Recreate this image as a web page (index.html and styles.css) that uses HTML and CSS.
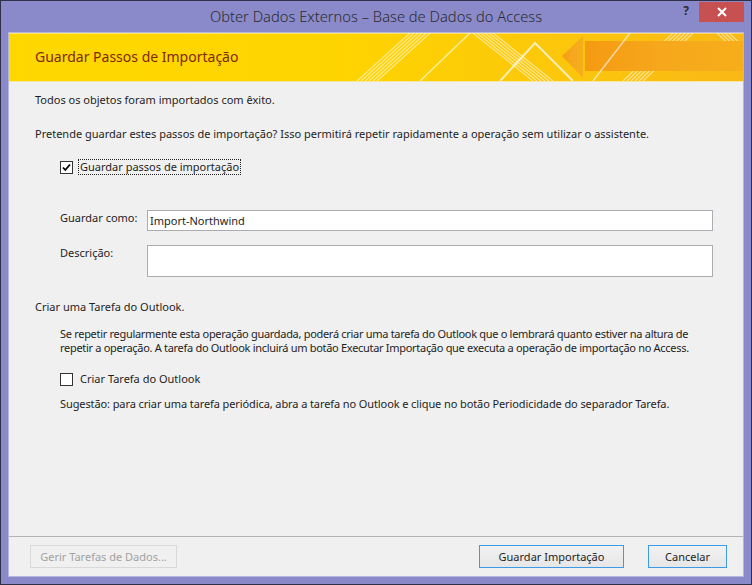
FILE: index.html
```html
<!DOCTYPE html>
<html lang="pt">
<head>
<meta charset="utf-8">
<title>Obter Dados Externos</title>
<link rel="stylesheet" href="styles.css">
</head>
<body>
<div class="window">
  <div class="titlebar">
    <div class="tb-side"></div>
    <div class="tb-title">Obter Dados Externos – Base de Dados do Access</div>
    <div class="tb-side tb-controls">
      <span class="tb-help">?</span>
      <span class="tb-close">
        <svg width="10" height="10" viewBox="0 0 10 10"><path d="M1 1L9 9M9 1L1 9" stroke="#fff" stroke-width="2"/></svg>
      </span>
    </div>
  </div>
  <div class="frame">
    <div class="banner">
      <svg class="banner-art" width="734" height="48" viewBox="0 0 734 48" preserveAspectRatio="none">
        <defs>
          <linearGradient id="bg" x1="0" y1="0" x2="1" y2="0">
            <stop offset="0" stop-color="#ffd800"/>
            <stop offset="0.45" stop-color="#fed400"/>
            <stop offset="0.75" stop-color="#fcc70b"/>
            <stop offset="1" stop-color="#f9b816"/>
          </linearGradient>
          <linearGradient id="arrow" x1="0" y1="0" x2="1" y2="0">
            <stop offset="0" stop-color="#f59a12"/>
            <stop offset="0.5" stop-color="#f6a81c"/>
            <stop offset="1" stop-color="#f7ae1a"/>
          </linearGradient>
        </defs>
        <rect width="734" height="48" fill="url(#bg)"/>
        <g stroke="#fff" stroke-opacity="0.55" stroke-width="1.2">
          <path d="M348 48L401 0M352 48L405 0M356 48L409 0M360 48L413 0M364 48L417 0M368 48L421 0"/>
          <path d="M464 0L524 48M468 0L528 48M472 0L532 48M476 0L536 48M480 0L540 48M484 0L544 48"/>
          <path d="M614 48L664 0M618 48L668 0M622 48L672 0M626 48L676 0M630 48L680 0M634 48L684 0"/>
          <path d="M708 0L740 30M712 0L744 30M716 0L748 30M720 0L752 30"/>
        </g>
        <path d="M411 48L461 0" stroke="#fff5b0" stroke-opacity="0.85" stroke-width="1.5"/>
        <path d="M553 23L574 3L574 45Z" fill="url(#arrow)"/>
        <rect x="576" y="8" width="158" height="30" fill="url(#arrow)"/>
        <path d="M491 48L526 10L564 48" fill="none" stroke="#fff" stroke-opacity="0.7" stroke-width="2"/>
        <path d="M584 48L621 0" stroke="#fff" stroke-opacity="0.6" stroke-width="1.5"/>
        <rect x="0" y="0" width="734" height="1" fill="#fff" fill-opacity="0.4"/>
      </svg>
      <div class="banner-title">Guardar Passos de Importação</div>
    </div>
    <div class="content">
      <p class="line first">Todos os objetos foram importados com êxito.</p>
      <p class="line q">Pretende guardar estes passos de importação? Isso permitirá repetir rapidamente a operação sem utilizar o assistente.</p>
      <div class="check-row save-check">
        <span class="box">
          <svg width="11" height="11" viewBox="0 0 11 11"><path d="M2 5.5L4.3 8L9 2.5" fill="none" stroke="#000" stroke-width="1.8"/></svg>
        </span>
        <span class="check-label focused">Guardar passos de importação</span>
      </div>
      <div class="field-row name-row">
        <label class="field-label">Guardar como:</label>
        <div class="input">Import-Northwind</div>
      </div>
      <div class="field-row desc-row">
        <label class="field-label">Descrição:</label>
        <div class="input textarea"></div>
      </div>
      <p class="line outlook">Criar uma Tarefa do Outlook.</p>
      <p class="para info">Se repetir regularmente esta operação guardada, poderá criar uma tarefa do Outlook que o lembrará quanto estiver na altura de<br>repetir a operação. A tarefa do Outlook incluirá um botão Executar Importação que executa a operação de importação no Access.</p>
      <div class="check-row task-check">
        <span class="box"></span>
        <span class="check-label">Criar Tarefa do Outlook</span>
      </div>
      <p class="para tip">Sugestão: para criar uma tarefa periódica, abra a tarefa no Outlook e clique no botão Periodicidade do separador Tarefa.</p>
    </div>
    <div class="footer">
      <button class="btn disabled">Gerir Tarefas de Dados...</button>
      <div class="spacer"></div>
      <button class="btn primary">Guardar Importação</button>
      <button class="btn cancel">Cancelar</button>
    </div>
  </div>
</div>
</body>
</html>
```

FILE: styles.css
```css
* { box-sizing: border-box; }
html, body { margin: 0; padding: 0; }
body {
  width: 752px;
  height: 585px;
  font-family: "Noto Sans", "Open Sans", sans-serif;
  font-size: 11px;
  color: #1e1e1e;
  background: #8a8acb;
}
.window {
  width: 752px;
  height: 585px;
  border: 1px solid #2f2f48;
  background: #8a8acb;
  display: flex;
  flex-direction: column;
}
.titlebar {
  height: 31px;
  display: grid;
  grid-template-columns: 1fr auto 1fr;
  align-items: start;
}
.tb-title {
  font-size: 14.7px;
  font-weight: 300;
  color: #2b2b2b;
  line-height: 30px;
  white-space: nowrap;
}
.tb-controls {
  display: flex;
  justify-content: flex-end;
  align-items: flex-start;
  padding-right: 7px;
  padding-top: 1px;
}
.tb-help {
  font-weight: bold;
  font-size: 12px;
  color: #2b2b2b;
  line-height: 18px;
  margin-right: 10px;
}
.tb-close {
  width: 45px;
  height: 20px;
  background: #c75050;
  display: flex;
  align-items: center;
  justify-content: center;
}
.frame {
  flex: 1;
  margin: 0 7px 7px 7px;
  border: 1px solid #b6b6df;
  background: #f0f0f0;
  display: flex;
  flex-direction: column;
}
.banner {
  position: relative;
  height: 49px;
  border-bottom: 1px solid #f7e7a0;
  display: flex;
  align-items: center;
  padding-left: 26px;
}
.banner-art {
  position: absolute;
  left: 0;
  top: 0;
  display: block;
}
.banner-title {
  position: relative;
  font-size: 14px;
  color: #7d2a00;
  padding-bottom: 1px;
}
.content {
  flex: 1;
  padding: 10px 0 0 26px;
  line-height: 14px;
}
p { margin: 0; }
.line.first { margin-top: 1px; }
.line.q { margin-top: 20px; }
.check-row {
  display: flex;
  align-items: center;
  margin-left: 25px;
}
.save-check { margin-top: 18px; }
.box {
  width: 13px;
  height: 13px;
  border: 1px solid #333;
  background: #fff;
  display: flex;
  align-items: center;
  justify-content: center;
  margin-right: 5px;
}
.check-label {
  padding: 0 1px;
  border: 1px dotted transparent;
}
.check-label.focused { border-color: #222; }
.field-row {
  display: flex;
  align-items: flex-start;
  margin-left: 25px;
}
.name-row { margin-top: 35px; }
.desc-row { margin-top: 14px; }
.field-label {
  width: 87px;
  padding-top: 1px;
}
.input {
  width: 566px;
  height: 21px;
  border: 1px solid #abadb3;
  background: #fff;
  padding: 2px 2px;
  line-height: 15px;
}
.input.textarea { height: 32px; }
.line.outlook { margin-top: 23px; }
.para { margin-left: 25px; margin-top: 13px; white-space: nowrap; }
.para.info { letter-spacing: -0.3px; }
.task-check { margin-top: 16px; }
.para.tip { margin-top: 10px; letter-spacing: -0.1px; }
.footer {
  height: 40px;
  border-top: 1px solid #b4b4b4;
  display: flex;
  align-items: flex-start;
  padding: 8px 16px 0 21px;
}
.spacer { flex: 1; }
.btn {
  font-family: inherit;
  font-size: 11px;
  height: 23px;
  padding: 0;
  background: linear-gradient(#f2f2f2, #e6e6e6);
  border: 1px solid #acacac;
  color: #1e1e1e;
}
.btn.disabled {
  width: 147px;
  color: #a2a2a2;
  background: #f0f0f0;
  border-color: #d9d9d9;
}
.btn.primary {
  width: 145px;
  border-color: #3c9be8;
  margin-right: 24px;
}
.btn.cancel {
  width: 79px;
  border-color: #3c9be8;
}
```
